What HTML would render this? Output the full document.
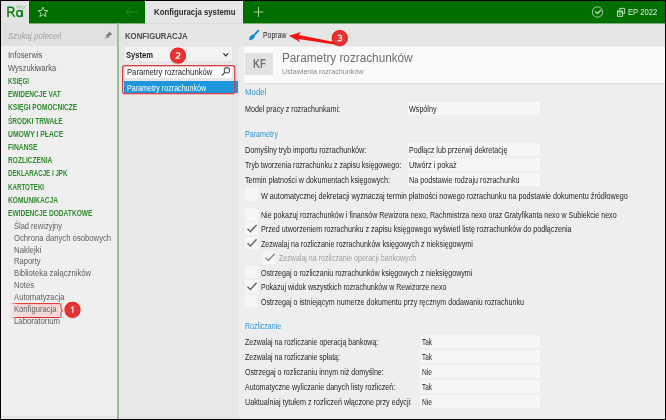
<!DOCTYPE html>
<html><head><meta charset="utf-8"><style>
html,body{margin:0;padding:0}
body{width:666px;height:420px;overflow:hidden;background:#000;position:relative;font-family:'Liberation Sans', sans-serif}
.t{position:absolute;white-space:nowrap;line-height:normal;transform-origin:0 0}
</style></head><body>
<div style="position:absolute;left:1px;top:1px;width:664px;height:22px;background:#006f00;"></div>
<div style="position:absolute;left:1px;top:1px;width:28px;height:22px;background:#e4e4e4;"></div>
<div style="position:absolute;left:145px;top:1px;width:98px;height:22px;background:#e6e6e6;"></div>
<div style="position:absolute;left:1px;top:23px;width:116px;height:396px;background:#efefef;"></div>
<div style="position:absolute;left:1px;top:23px;width:116px;height:23px;background:#e1e1e1;"></div>
<div style="position:absolute;left:1px;top:416px;width:116px;height:2px;background:#e3e3e3;"></div>
<div style="position:absolute;left:119px;top:23px;width:120px;height:396px;background:#e7e7e7;"></div>
<div style="position:absolute;left:239px;top:46px;width:426px;height:373px;background:#eeeeee;"></div>
<div style="position:absolute;left:119px;top:23px;width:546px;height:23px;background:#e6e6e6;"></div>
<div style="position:absolute;left:29px;top:23px;width:116px;height:1px;background:rgba(0,111,0,0.45);"></div>
<div style="position:absolute;left:243px;top:23px;width:422px;height:1px;background:rgba(0,111,0,0.45);"></div>
<div style="position:absolute;left:145px;top:23px;width:98px;height:1px;background:rgba(0,0,0,0.04);"></div>
<div style="position:absolute;left:117px;top:23px;width:2px;height:396px;background:#9ac09a;"></div>
<div style="position:absolute;left:244px;top:47px;width:421px;height:36px;background:#fafafa;box-shadow:0 1px 1px rgba(0,0,0,0.07)"></div>
<div style="position:absolute;left:245px;top:53px;width:28px;height:22px;background:#e2e2e2;"></div>
<div style="position:absolute;left:125px;top:47px;width:107px;height:14px;background:#f3f3f3;"></div>
<div style="position:absolute;left:125px;top:67px;width:107px;height:11px;background:#ffffff;"></div>
<div style="position:absolute;left:124px;top:81.4px;width:114px;height:12.0px;background:#1e96dc;"></div>
<div style="position:absolute;left:408px;top:102.3px;width:132px;height:12.799999999999997px;background:#f6f6f6;"></div>
<div style="position:absolute;left:408px;top:143.4px;width:132px;height:12.800000000000011px;background:#f6f6f6;"></div>
<div style="position:absolute;left:408px;top:158.3px;width:132px;height:12.800000000000011px;background:#f6f6f6;"></div>
<div style="position:absolute;left:408px;top:173.3px;width:132px;height:12.800000000000011px;background:#f6f6f6;"></div>
<div style="position:absolute;left:420px;top:335.2px;width:120px;height:13.0px;background:#f6f6f6;"></div>
<div style="position:absolute;left:420px;top:350.25px;width:120px;height:13.0px;background:#f6f6f6;"></div>
<div style="position:absolute;left:420px;top:365.3px;width:120px;height:13.0px;background:#f6f6f6;"></div>
<div style="position:absolute;left:420px;top:380.35px;width:120px;height:13.0px;background:#f6f6f6;"></div>
<div style="position:absolute;left:420px;top:395.4px;width:120px;height:13.0px;background:#f6f6f6;"></div>
<div style="position:absolute;left:245px;top:188.3px;width:13px;height:12.800000000000011px;background:#f6f6f6;"></div>
<div style="position:absolute;left:245px;top:207.8px;width:13px;height:12.800000000000011px;background:#f6f6f6;"></div>
<div style="position:absolute;left:245px;top:222.20000000000002px;width:13px;height:12.800000000000011px;background:#f6f6f6;"></div>
<div style="position:absolute;left:245px;top:236.60000000000002px;width:13px;height:12.800000000000011px;background:#f6f6f6;"></div>
<div style="position:absolute;left:263px;top:251.10000000000002px;width:13px;height:12.800000000000011px;background:#f6f6f6;"></div>
<div style="position:absolute;left:245px;top:265.6px;width:13px;height:12.800000000000011px;background:#f6f6f6;"></div>
<div style="position:absolute;left:245px;top:280.1px;width:13px;height:12.800000000000011px;background:#f6f6f6;"></div>
<div style="position:absolute;left:245px;top:294.6px;width:13px;height:12.800000000000011px;background:#f6f6f6;"></div>
<svg style="position:absolute;left:8px;top:301px" width="60" height="19" viewBox="0 0 60 19">
<defs><linearGradient id="gf" x1="0" x2="1"><stop offset="0" stop-color="#e12b2b" stop-opacity="0"/><stop offset="0.14" stop-color="#e12b2b" stop-opacity="1"/></linearGradient>
<linearGradient id="gp" x1="0" x2="1"><stop offset="0" stop-color="#f3dada" stop-opacity="0"/><stop offset="0.14" stop-color="#f3dada" stop-opacity="1"/></linearGradient></defs>
<path d="M2 2.6 H51.5 Q53 2.6 53 4.1 V8.3 L55 9.6 L53 10.9 V15 Q53 16.5 51.5 16.5 H2 Z" fill="url(#gp)" stroke="url(#gf)" stroke-width="1.0"/>
</svg>
<div class="t" style="left:154.0px;top:7px;font-size:8.30px;font-weight:700;font-style:normal;color:#2b2b2b;transform:scaleX(0.941);">Konfiguracja systemu</div>
<div class="t" style="left:628.4px;top:7px;font-size:9.30px;font-weight:400;font-style:normal;color:#d9ecd9;transform:scaleX(0.823);">EP 2022</div>
<div class="t" style="left:8.1px;top:31px;font-size:8.60px;font-weight:400;font-style:italic;color:#a2a2a2;transform:scaleX(0.922);">Szukaj poleceń</div>
<div class="t" style="left:7.6px;top:50px;font-size:8.60px;font-weight:400;font-style:normal;color:#555555;transform:scaleX(0.890);">Infoserwis</div>
<div class="t" style="left:7.6px;top:63px;font-size:8.60px;font-weight:400;font-style:normal;color:#555555;transform:scaleX(0.881);">Wyszukiwarka</div>
<div class="t" style="left:7.7px;top:77px;font-size:8.20px;font-weight:700;font-style:normal;color:#318c31;transform:scaleX(0.760);">KSIĘGI</div>
<div class="t" style="left:7.7px;top:90px;font-size:8.20px;font-weight:700;font-style:normal;color:#318c31;transform:scaleX(0.796);">EWIDENCJE VAT</div>
<div class="t" style="left:7.7px;top:103px;font-size:8.20px;font-weight:700;font-style:normal;color:#318c31;transform:scaleX(0.810);">KSIĘGI POMOCNICZE</div>
<div class="t" style="left:7.7px;top:117px;font-size:8.20px;font-weight:700;font-style:normal;color:#318c31;transform:scaleX(0.797);">ŚRODKI TRWAŁE</div>
<div class="t" style="left:7.7px;top:130px;font-size:8.20px;font-weight:700;font-style:normal;color:#318c31;transform:scaleX(0.827);">UMOWY I PŁACE</div>
<div class="t" style="left:7.7px;top:143px;font-size:8.20px;font-weight:700;font-style:normal;color:#318c31;transform:scaleX(0.818);">FINANSE</div>
<div class="t" style="left:7.7px;top:156px;font-size:8.20px;font-weight:700;font-style:normal;color:#318c31;transform:scaleX(0.805);">ROZLICZENIA</div>
<div class="t" style="left:7.7px;top:169px;font-size:8.20px;font-weight:700;font-style:normal;color:#318c31;transform:scaleX(0.755);">DEKLARACJE I JPK</div>
<div class="t" style="left:7.7px;top:183px;font-size:8.20px;font-weight:700;font-style:normal;color:#318c31;transform:scaleX(0.758);">KARTOTEKI</div>
<div class="t" style="left:7.7px;top:196px;font-size:8.20px;font-weight:700;font-style:normal;color:#318c31;transform:scaleX(0.816);">KOMUNIKACJA</div>
<div class="t" style="left:7.7px;top:209px;font-size:8.20px;font-weight:700;font-style:normal;color:#318c31;transform:scaleX(0.804);">EWIDENCJE DODATKOWE</div>
<div class="t" style="left:13.9px;top:221px;font-size:8.40px;font-weight:400;font-style:normal;color:#5e5e5e;transform:scaleX(0.897);">Ślad rewizyjny</div>
<div class="t" style="left:13.9px;top:233px;font-size:8.40px;font-weight:400;font-style:normal;color:#5e5e5e;transform:scaleX(0.919);">Ochrona danych osobowych</div>
<div class="t" style="left:13.9px;top:245px;font-size:8.40px;font-weight:400;font-style:normal;color:#5e5e5e;transform:scaleX(0.932);">Naklejki</div>
<div class="t" style="left:13.9px;top:256px;font-size:8.40px;font-weight:400;font-style:normal;color:#5e5e5e;transform:scaleX(0.905);">Raporty</div>
<div class="t" style="left:13.9px;top:268px;font-size:8.40px;font-weight:400;font-style:normal;color:#5e5e5e;transform:scaleX(0.921);">Biblioteka załączników</div>
<div class="t" style="left:13.9px;top:280px;font-size:8.40px;font-weight:400;font-style:normal;color:#5e5e5e;transform:scaleX(0.921);">Notes</div>
<div class="t" style="left:13.9px;top:292px;font-size:8.40px;font-weight:400;font-style:normal;color:#5e5e5e;transform:scaleX(0.919);">Automatyzacja</div>
<div class="t" style="left:13.9px;top:304px;font-size:8.40px;font-weight:400;font-style:normal;color:#5e5e5e;transform:scaleX(0.913);">Konfiguracja</div>
<div class="t" style="left:13.9px;top:316px;font-size:8.40px;font-weight:400;font-style:normal;color:#5e5e5e;transform:scaleX(0.932);">Laboratorium</div>
<div class="t" style="left:124.8px;top:31px;font-size:8.70px;font-weight:700;font-style:normal;color:#4d4d4d;transform:scaleX(0.895);">KONFIGURACJA</div>
<div class="t" style="left:126.0px;top:49px;font-size:9.60px;font-weight:700;font-style:normal;color:#1e1e1e;transform:scaleX(0.792);">System</div>
<div class="t" style="left:126.5px;top:67px;font-size:8.30px;font-weight:400;font-style:normal;color:#222222;transform:scaleX(0.925);">Parametry rozrachunków</div>
<div class="t" style="left:126.7px;top:83px;font-size:8.30px;font-weight:400;font-style:normal;color:#ffffff;transform:scaleX(0.859);">Parametry rozrachunków</div>
<div class="t" style="left:262.6px;top:31px;font-size:8.20px;font-weight:400;font-style:normal;color:#262626;transform:scaleX(0.846);">Popraw</div>
<div class="t" style="left:253.0px;top:56px;font-size:12.80px;font-weight:700;font-style:normal;color:#737373;transform:scaleX(0.750);">KF</div>
<div class="t" style="left:282.4px;top:51px;font-size:12.50px;font-weight:400;font-style:normal;color:#6e6e6e;transform:scaleX(0.940);">Parametry rozrachunków</div>
<div class="t" style="left:282.4px;top:67px;font-size:7.80px;font-weight:400;font-style:normal;color:#8a8a8a;transform:scaleX(0.915);">Ustawienia rozrachunków</div>
<div class="t" style="left:244.9px;top:87px;font-size:8.30px;font-weight:400;font-style:normal;color:#3096cf;transform:scaleX(0.944);">Model</div>
<div class="t" style="left:244.9px;top:104px;font-size:8.40px;font-weight:400;font-style:normal;color:#262626;transform:scaleX(0.850);">Model pracy z rozrachunkami:</div>
<div class="t" style="left:409.2px;top:104px;font-size:8.40px;font-weight:400;font-style:normal;color:#262626;transform:scaleX(0.858);">Wspólny</div>
<div class="t" style="left:244.9px;top:129px;font-size:8.30px;font-weight:400;font-style:normal;color:#3096cf;transform:scaleX(0.861);">Parametry</div>
<div class="t" style="left:244.9px;top:145px;font-size:8.40px;font-weight:400;font-style:normal;color:#262626;transform:scaleX(0.866);">Domyślny tryb importu rozrachunków:</div>
<div class="t" style="left:244.9px;top:160px;font-size:8.40px;font-weight:400;font-style:normal;color:#262626;transform:scaleX(0.844);">Tryb tworzenia rozrachunku z zapisu księgowego:</div>
<div class="t" style="left:244.9px;top:175px;font-size:8.40px;font-weight:400;font-style:normal;color:#262626;transform:scaleX(0.855);">Termin płatności w dokumentach księgowych:</div>
<div class="t" style="left:409.2px;top:145px;font-size:8.40px;font-weight:400;font-style:normal;color:#262626;transform:scaleX(0.852);">Podłącz lub przerwij dekretację</div>
<div class="t" style="left:409.2px;top:160px;font-size:8.40px;font-weight:400;font-style:normal;color:#262626;transform:scaleX(0.867);">Utwórz i pokaż</div>
<div class="t" style="left:409.2px;top:175px;font-size:8.40px;font-weight:400;font-style:normal;color:#262626;transform:scaleX(0.857);">Na podstawie rodzaju rozrachunku</div>
<div class="t" style="left:260.5px;top:191px;font-size:8.40px;font-weight:400;font-style:normal;color:#262626;transform:scaleX(0.863);">W automatycznej dekretacji wyznaczaj termin płatności nowego rozrachunku na podstawie dokumentu źródłowego</div>
<div class="t" style="left:260.5px;top:210px;font-size:8.40px;font-weight:400;font-style:normal;color:#262626;transform:scaleX(0.844);">Nie pokazuj rozrachunków i finansów Rewizora nexo, Rachmistrza nexo oraz Gratyfikanta nexo w Subiekcie nexo</div>
<div class="t" style="left:260.5px;top:224px;font-size:8.40px;font-weight:400;font-style:normal;color:#262626;transform:scaleX(0.854);">Przed utworzeniem rozrachunku z zapisu księgowego wyświetl listę rozrachunków do podłączenia</div>
<div class="t" style="left:260.5px;top:239px;font-size:8.40px;font-weight:400;font-style:normal;color:#262626;transform:scaleX(0.847);">Zezwalaj na rozliczanie rozrachunków księgowych z nieksięgowymi</div>
<div class="t" style="left:279.4px;top:253px;font-size:8.40px;font-weight:400;font-style:normal;color:#a0a0a0;transform:scaleX(0.844);">Zezwalaj na rozliczanie operacji bankowych</div>
<div class="t" style="left:260.5px;top:268px;font-size:8.40px;font-weight:400;font-style:normal;color:#262626;transform:scaleX(0.852);">Ostrzegaj o rozliczaniu rozrachunków księgowych z nieksięgowymi</div>
<div class="t" style="left:260.5px;top:282px;font-size:8.40px;font-weight:400;font-style:normal;color:#262626;transform:scaleX(0.840);">Pokazuj widok wszystkich rozrachunków w Rewizorze nexo</div>
<div class="t" style="left:260.5px;top:297px;font-size:8.40px;font-weight:400;font-style:normal;color:#262626;transform:scaleX(0.852);">Ostrzegaj o istniejącym numerze dokumentu przy ręcznym dodawaniu rozrachunku</div>
<div class="t" style="left:244.9px;top:321px;font-size:8.30px;font-weight:400;font-style:normal;color:#3096cf;transform:scaleX(0.853);">Rozliczanie</div>
<div class="t" style="left:244.9px;top:337px;font-size:8.40px;font-weight:400;font-style:normal;color:#262626;transform:scaleX(0.837);">Zezwalaj na rozliczanie operacją bankową:</div>
<div class="t" style="left:421.6px;top:337px;font-size:8.40px;font-weight:400;font-style:normal;color:#262626;transform:scaleX(0.766);">Tak</div>
<div class="t" style="left:244.9px;top:352px;font-size:8.40px;font-weight:400;font-style:normal;color:#262626;transform:scaleX(0.836);">Zezwalaj na rozliczanie spłatą:</div>
<div class="t" style="left:421.6px;top:352px;font-size:8.40px;font-weight:400;font-style:normal;color:#262626;transform:scaleX(0.766);">Tak</div>
<div class="t" style="left:244.9px;top:367px;font-size:8.40px;font-weight:400;font-style:normal;color:#262626;transform:scaleX(0.852);">Ostrzegaj o rozliczaniu innym niż domyślne:</div>
<div class="t" style="left:421.6px;top:367px;font-size:8.40px;font-weight:400;font-style:normal;color:#262626;transform:scaleX(0.794);">Nie</div>
<div class="t" style="left:244.9px;top:382px;font-size:8.40px;font-weight:400;font-style:normal;color:#262626;transform:scaleX(0.847);">Automatyczne wyliczanie danych listy rozliczeń:</div>
<div class="t" style="left:421.6px;top:382px;font-size:8.40px;font-weight:400;font-style:normal;color:#262626;transform:scaleX(0.766);">Tak</div>
<div style="position:absolute;left:0;top:0;width:411.2px;height:420px;overflow:hidden"><div class="t" style="left:244.9px;top:397px;font-size:8.40px;font-weight:400;font-style:normal;color:#262626;transform:scaleX(0.861);">Uaktualniaj tytułem z rozliczeń włączone przy edycji:</div></div>
<div class="t" style="left:421.6px;top:397px;font-size:8.40px;font-weight:400;font-style:normal;color:#262626;transform:scaleX(0.794);">Nie</div>
<svg style="position:absolute;left:0;top:0" width="666" height="420" viewBox="0 0 666 420"><path d="M8 17 V7.3 H11 C13.2 7.3 13.8 8.5 13.8 9.7 C13.8 11 12.9 12.2 11 12.2 H8 M11.2 12.2 L14.8 16.9" fill="none" stroke="#0b7f0b" stroke-width="1.5"/>
<ellipse cx="19.3" cy="13.5" rx="2.6" ry="3.1" fill="none" stroke="#0b7f0b" stroke-width="1.45"/>
<path d="M22.2 10.2 V17" stroke="#0b7f0b" stroke-width="1.5"/>
<g fill="none" stroke="#8cc68c" stroke-width="0.65">
<path d="M16.8 8.6 V5.9 H17.9 Q18.7 5.9 18.7 6.6 Q18.7 7.3 17.9 7.3 H16.8"/>
<path d="M19.8 8.6 V5.9 H20.9 Q21.7 5.9 21.7 6.6 Q21.7 7.3 20.9 7.3 H19.8 M20.9 7.3 L21.8 8.6"/>
<ellipse cx="23.6" cy="7.25" rx="1.0" ry="1.3"/>
</g>
<path transform="translate(37,6)" d="M6 1 L7.35 4.45 L11 4.6 L8.15 6.9 L9.15 10.6 L6 8.55 L2.85 10.6 L3.85 6.9 L1 4.6 L4.65 4.45 Z" fill="none" stroke="#bedfbe" stroke-width="0.85" stroke-linejoin="round"/>
<path d="M126 12 H138 M131 7 L126 12 L131 17" fill="none" stroke="#2b8a2b" stroke-width="0.9"/>
<path d="M258.5 6.8 V17 M253.6 12 H263.3" fill="none" stroke="#a9d3a9" stroke-width="0.95"/>
<circle cx="597.5" cy="12" r="5.2" fill="none" stroke="#a9d3a9" stroke-width="1"/>
<path d="M595.1 11.5 L597.5 13.4 L600.9 10.3" fill="none" stroke="#d3ead3" stroke-width="1.25"/>
<path d="M619.6 10.2 V8.4 H624.6 V13.4 H622.8" fill="none" stroke="#cfe6cf" stroke-width="0.9"/>
<rect x="617.4" y="10.9" width="5" height="5.4" fill="none" stroke="#cfe6cf" stroke-width="0.9"/>
<path d="M617.4 11.9 H622.4 M619.9 13.3 V15" stroke="#cfe6cf" stroke-width="1"/>
<path d="M105.2 38.6 L107.3 36.4" stroke="#7a7a7a" stroke-width="1"/>
<path d="M105.9 34.8 L109.0 37.9" stroke="#767676" stroke-width="1.2"/>
<path d="M106.7 35.1 L109.1 32.7 L110.8 34.4 L108.4 36.8 Z" fill="#767676"/>
<path d="M109.0 32.2 L111.5 34.7" stroke="#767676" stroke-width="1.4"/>
<path d="M223.4 53.4 L225.8 55.9 L228.2 53.4" fill="none" stroke="#222" stroke-width="1.05"/>
<circle cx="226.9" cy="70.3" r="2.7" fill="none" stroke="#555" stroke-width="1.05"/>
<path d="M225 72.3 L221.7 75.5" stroke="#555" stroke-width="1.3"/>
<path d="M258.3 30.7 L254.4 34.8" stroke="#1c8cc9" stroke-width="1.9" stroke-linecap="round"/>
<ellipse cx="252.0" cy="37.3" rx="3.3" ry="2.0" transform="rotate(-45 252.0 37.3)" fill="#1c8cc9"/>
<path d="M249.2 39.8 L250.6 37.6 L251.8 38.8 Z" fill="#1c8cc9"/>
<path transform="translate(245,222.2)" d="M2.5 6.6 L5.4 9.4 L11.6 2.7" fill="none" stroke="#6a6a6a" stroke-width="1.5"/>
<path transform="translate(245,236.6)" d="M2.5 6.6 L5.4 9.4 L11.6 2.7" fill="none" stroke="#6a6a6a" stroke-width="1.5"/>
<path transform="translate(263,251.1)" d="M2.5 6.6 L5.4 9.4 L11.6 2.7" fill="none" stroke="#8a8a8a" stroke-width="1.5"/>
<path transform="translate(245,280.1)" d="M2.5 6.6 L5.4 9.4 L11.6 2.7" fill="none" stroke="#6a6a6a" stroke-width="1.5"/>
<rect x="122.6" y="65.7" width="112.2" height="28" rx="2.2" fill="none" stroke="#e43c3c" stroke-width="1.25"/>
<path d="M289 35.8 L300.8 32.1 L298.9 35.1 L336.8 42.4 L336.2 44.8 L298.3 39.0 L300.3 42.3 Z" fill="#f41414"/>
<defs><filter id="sh" x="-30%" y="-30%" width="160%" height="160%"><feDropShadow dx="0" dy="0.5" stdDeviation="0.7" flood-opacity="0.3"/></filter></defs>
<circle cx="178" cy="55.5" r="7.5" fill="#e23535" stroke="#f61c1c" stroke-width="1.1" filter="url(#sh)"/>
<path transform="translate(178 55.5) scale(0.86) translate(-178 -55.5)" d="M175.90 53.50 C176.30 52.00 180.30 51.80 180.20 54.20 C180.10 55.70 177.10 56.90 175.70 58.70 H180.50" fill="none" stroke="#fbeeee" stroke-width="1.4"/>
<circle cx="72.5" cy="309.8" r="7.5" fill="#e23535" stroke="#f61c1c" stroke-width="1.1" filter="url(#sh)"/>
<path transform="translate(72.5 309.8) scale(0.86) translate(-72.5 -309.8)" d="M71.00 307.90 L72.90 306.60 V313.10" fill="none" stroke="#fbeeee" stroke-width="1.4"/>
<circle cx="339.75" cy="38" r="7.5" fill="#e23535" stroke="#f61c1c" stroke-width="1.1" filter="url(#sh)"/>
<path transform="translate(339.75 38) scale(0.86) translate(-339.75 -38)" d="M337.65 35.40 C338.75 34.30 341.95 34.50 341.75 36.50 C341.65 37.60 340.55 37.90 339.35 37.90 C340.85 37.90 342.15 38.40 342.05 39.70 C341.95 41.70 338.55 41.80 337.45 40.60" fill="none" stroke="#fbeeee" stroke-width="1.4"/></svg>
</body></html>
